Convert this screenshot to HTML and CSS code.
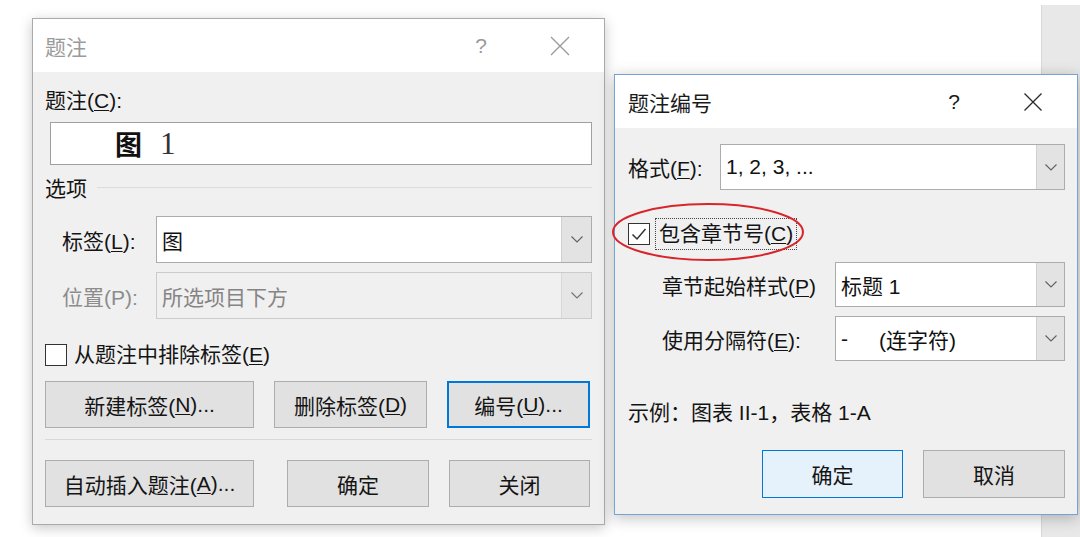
FILE: index.html
```html
<!DOCTYPE html>
<html lang="zh-CN">
<head>
<meta charset="utf-8">
<title>题注</title>
<link rel="stylesheet" href="styles.css">
</head>
<body>
<div class="strip"></div>

<section class="dlg dlg-caption">
  <header class="titlebar inactive">
    <span class="title">题注</span>
    <span class="help">?</span>
    <span class="close"><svg width="20" height="20" viewBox="0 0 20 20"><path d="M1 1 L19 19 M19 1 L1 19" stroke="#9a9a9a" stroke-width="1.3" fill="none"/></svg></span>
  </header>
  <div class="body">
    <div class="lbl">题注(<u>C</u>):</div>
    <div class="caption-input"><span class="fig">图</span><span class="num">1</span></div>
    <div class="group"><span>选项</span><i class="rule"></i></div>
    <div class="field">
      <label class="flabel">标签(<u>L</u>):</label>
      <div class="combo"><span class="val">图</span><span class="arrow"><svg width="12" height="7" viewBox="0 0 12 7"><path d="M0.5 0.5 L6 6 L11.5 0.5" stroke="#606060" stroke-width="1.1" fill="none"/></svg></span></div>
    </div>
    <div class="field disabled">
      <label class="flabel">位置(P):</label>
      <div class="combo"><span class="val">所选项目下方</span><span class="arrow"><svg width="12" height="7" viewBox="0 0 12 7"><path d="M0.5 0.5 L6 6 L11.5 0.5" stroke="#707070" stroke-width="1.1" fill="none"/></svg></span></div>
    </div>
    <div class="check">
      <span class="box"></span><span class="ctext">从题注中排除标签(<u>E</u>)</span>
    </div>
    <div class="btnrow">
      <button class="btn w209">新建标签(<u>N</u>)...</button>
      <button class="btn w153 g20">删除标签(<u>D</u>)</button>
      <button class="btn w143 g20 focus">编号(<u>U</u>)...</button>
    </div>
    <div class="sep"></div>
    <div class="btnrow row2">
      <button class="btn w209">自动插入题注(<u>A</u>)...</button>
      <button class="btn w142 g33">确定</button>
      <button class="btn w141 g20">关闭</button>
    </div>
  </div>
</section>

<section class="dlg dlg-number">
  <header class="titlebar">
    <span class="title">题注编号</span>
    <span class="help">?</span>
    <span class="close"><svg width="20" height="20" viewBox="0 0 20 20"><path d="M1.5 1.5 L18.5 18.5 M18.5 1.5 L1.5 18.5" stroke="#2a2a2a" stroke-width="1.3" fill="none"/></svg></span>
  </header>
  <div class="body">
    <div class="field f-format">
      <label class="flabel">格式(<u>F</u>):</label>
      <div class="combo"><span class="val">1, 2, 3, ...</span><span class="arrow"><svg width="12" height="7" viewBox="0 0 12 7"><path d="M0.5 0.5 L6 6 L11.5 0.5" stroke="#606060" stroke-width="1.1" fill="none"/></svg></span></div>
    </div>
    <div class="check check-chapter">
      <span class="box"><svg width="20" height="20" viewBox="0 0 20 20"><path d="M3.5 10.5 L8 15 L16.5 5" stroke="#333" stroke-width="1.5" fill="none"/></svg></span>
      <span class="ctext focusrect">包含章节号(<u>C</u>)</span>
    </div>
    <div class="field f-sub">
      <label class="flabel">章节起始样式(<u>P</u>)</label>
      <div class="combo"><span class="val">标题 1</span><span class="arrow"><svg width="12" height="7" viewBox="0 0 12 7"><path d="M0.5 0.5 L6 6 L11.5 0.5" stroke="#606060" stroke-width="1.1" fill="none"/></svg></span></div>
    </div>
    <div class="field f-sub f-sep">
      <label class="flabel">使用分隔符(<u>E</u>):</label>
      <div class="combo"><span class="val"><span class="dash">-</span>(连字符)</span><span class="arrow"><svg width="12" height="7" viewBox="0 0 12 7"><path d="M0.5 0.5 L6 6 L11.5 0.5" stroke="#606060" stroke-width="1.1" fill="none"/></svg></span></div>
    </div>
    <div class="example">示例：图表 II-1，表格 1-A</div>
    <div class="btnrow right">
      <button class="btn w141 default">确定</button>
      <button class="btn w142 g20">取消</button>
    </div>
  </div>
</section>

<svg class="mark" width="200" height="64" viewBox="0 0 200 64"><ellipse cx="98" cy="30" rx="95" ry="28" fill="none" stroke="#d8252b" stroke-width="2"/></svg>
</body>
</html>
```
FILE: styles.css
```css
* { box-sizing: border-box; }
html, body { margin: 0; padding: 0; }
body {
  width: 1080px;
  height: 537px;
  background: #fff;
  font-family: "Liberation Sans", "Noto Sans CJK SC", sans-serif;
  font-size: 21px;
  color: #141414;
  position: relative;
  overflow: hidden;
}
u { text-decoration: underline; text-underline-offset: 2px; text-decoration-thickness: 1px; }

.strip {
  position: absolute;
  left: 1041px;
  top: 5px;
  width: 39px;
  bottom: 0;
  background: #e8e8e8;
  border-left: 1px solid #d8d8d8;
}

.dlg {
  position: absolute;
  background: #f0f0f0;
  display: flex;
  flex-direction: column;
}
.dlg-caption {
  left: 32px;
  top: 18px;
  width: 573px;
  height: 507px;
  border: 1px solid #aaaaaa;
  box-shadow: 0 3px 12px rgba(0, 0, 0, 0.22);
}
.dlg-number {
  left: 614px;
  top: 74px;
  width: 464px;
  height: 441px;
  border: 1px solid #74a3d8;
  box-shadow: 0 3px 14px rgba(0, 0, 0, 0.25);
}

.titlebar {
  height: 53px;
  flex: none;
  background: #fff;
  display: flex;
  align-items: center;
  color: #1a1a1a;
}
.dlg-caption .titlebar { padding: 0 34px 0 12px; }
.dlg-number .titlebar { padding: 0 34px 0 13px; }
.titlebar.inactive { color: #9a9a9a; }
.title { flex: 1; }
.help { width: 20px; text-align: center; font-size: 21px; }
.close { width: 20px; height: 20px; margin-left: 59px; display: flex; }

.dlg-caption .body { padding: 0 12px; }
.dlg-number .body { padding: 0 12px 0 13px; }

.lbl { margin-top: 17px; height: 24px; line-height: 24px; }

.caption-input {
  margin: 9px 0 0 5px;
  height: 43px;
  background: #fff;
  border: 1px solid #a0a0a0;
  display: flex;
  align-items: center;
  padding-left: 64px;
  color: #111;
}
.fig { font-family: "Noto Sans CJK SC", sans-serif; font-size: 27px; font-weight: 700; line-height: 30px; }
.num { font-family: "Liberation Serif", serif; font-size: 31px; line-height: 30px; margin-left: 18px; color: #333; }

.group { margin-top: 10px; height: 24px; display: flex; align-items: center; }
.rule { flex: 1; height: 1px; background: #dcdcdc; margin-left: 10px; }

.field { display: flex; align-items: center; height: 47px; }
.dlg-caption .field { margin-top: 17px; padding-left: 17px; }
.dlg-caption .field.disabled { margin-top: 9px; }
.dlg-caption .flabel { width: 94px; }
.field.disabled .flabel { color: #8c8c8c; }

.combo {
  flex: 1;
  height: 100%;
  display: flex;
  background: #fff;
  border: 1px solid #acacac;
}
.combo .val { flex: 1; display: flex; align-items: center; padding-left: 5px; color: #111; }
.combo .arrow {
  width: 30px;
  background: #e3e3e3;
  border-left: 1px solid #d0d0d0;
  display: flex;
  align-items: center;
  justify-content: center;
}
.field.disabled .combo { background: #f0f0f0; border-color: #cbcbcb; }
.field.disabled .combo .val { color: #858585; }
.field.disabled .combo .arrow { background: #e6e6e6; border-left-color: #d8d8d8; }

.check { display: flex; align-items: center; height: 23px; margin-top: 24px; }
.box {
  width: 22px;
  height: 22px;
  flex: none;
  background: #fff;
  border: 1px solid #333;
  display: flex;
  align-items: center;
  justify-content: center;
}
.ctext { margin-left: 7px; line-height: 24px; }

.btnrow { display: flex; height: 47px; margin-top: 15px; }
.btnrow.row2 { margin-top: 20px; }
.btn {
  height: 100%;
  background: #e1e1e1;
  border: 1px solid #adadad;
  font: inherit;
  color: #141414;
  padding: 0;
  display: flex;
  align-items: center;
  justify-content: center;
}
.btn.focus { border: 2px solid #0078d7; }
.btn.default { background: #e5f1fb; border-color: #0078d7; }
.w209 { width: 209px; }
.w153 { width: 153px; }
.w143 { width: 143px; }
.w142 { width: 142px; }
.w141 { width: 141px; }
.g20 { margin-left: 20px; }
.g33 { margin-left: 33px; }

.sep { margin-top: 11px; height: 1px; background: #d9d9d9; }

/* right dialog */
.f-format { margin-top: 16px; height: 46px; }
.f-format .flabel { width: 92px; }
.dlg-number .combo .arrow { width: 28px; }
.check-chapter { margin-top: 33px; height: 22px; }
.check-chapter .box { width: 22px; height: 22px; }
.focusrect { margin-left: 5px; padding: 2px 3px; line-height: 26px; border: 1px dotted #444; }
.f-sub { margin-top: 17px; height: 45px; padding-left: 34px; }
.f-sub .flabel { width: 173px; }
.f-sep { margin-top: 9px; }
.dash { width: 38px; }
.example { margin-top: 40px; line-height: 24px; height: 24px; }
.btnrow.right { justify-content: flex-end; margin-top: 25px; height: 48px; }

.mark { position: absolute; left: 610px; top: 202px; }
```
